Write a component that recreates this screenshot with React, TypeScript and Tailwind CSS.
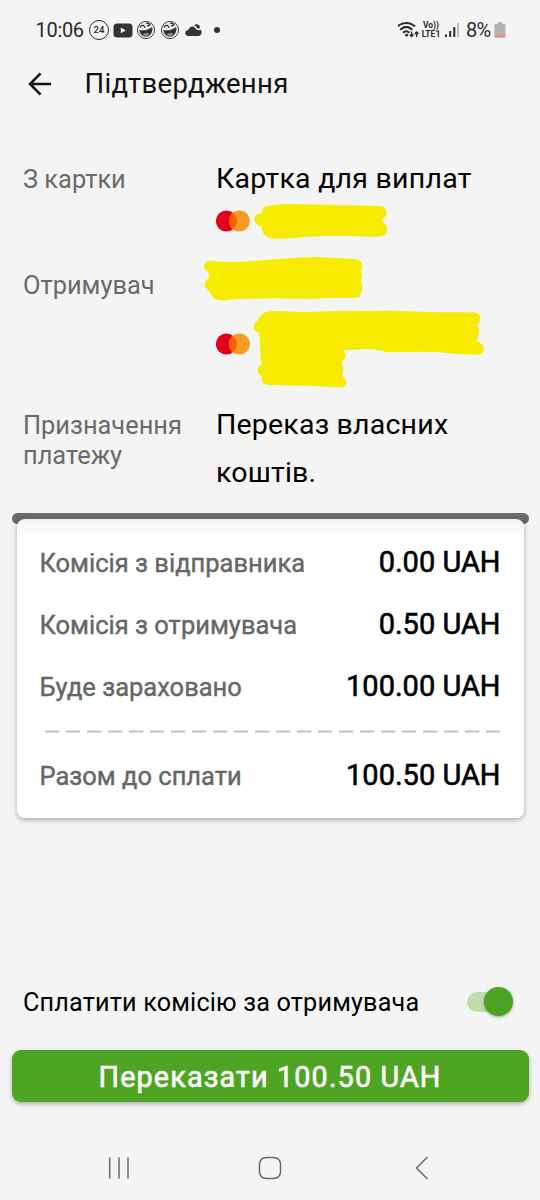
import type { ReactNode } from "react";

const fees = [
  { label: "Комісія з відправника", value: "0.00 UAH" },
  { label: "Комісія з отримувача", value: "0.50 UAH" },
  { label: "Буде зараховано", value: "100.00 UAH" },
];

function LaughIcon() {
  return (
    <svg className="h-5 w-5 shrink-0" viewBox="0 0 20 20" fill="none">
      <circle cx="10" cy="10" r="8.6" fill="#e9e9e9" stroke="#4a4a4a" strokeWidth="1" />
      <path d="M3.400 10c4.200 1 9-.2 12.800-3 .8 4.400-1.200 8.800-5.600 9.600-4 .4-6.800-2.400-7.200-6.600z" fill="#333" />
      <path d="M6.600 14.600c1.800-1.600 4.800-1.800 6.600-1-.8 1.400-1.800 2.200-3.200 2.400-1.400 0-2.400-.4-3.400-1.400z" fill="#999" />
      <path d="M3.800 7.400c.8-1.800 2.200-2.400 4.200-1.800M10.200 3.400c2-.6 3.400 0 4 1.800M8.200 5.800l.6 2M11.200 6.200l2.400-1" stroke="#333" strokeWidth="1.400" />
    </svg>
  );
}

function StatusBar() {
  return (
    <div className="flex h-[60px] items-center pl-[35.500px] pr-[34px] text-[#2a2a2a]">
      <span className="w-[53.500px] text-[20px] leading-5 tracking-[-0.3px] whitespace-nowrap">10:06</span>
      <div className="flex h-5 w-5 items-center justify-center rounded-full border-[1.5px] border-[#2a2a2a] text-[9.500px] leading-none font-medium">
        24
      </div>
      <svg className="ml-1 h-5 w-5" viewBox="0 0 20 20">
        <rect x="0.500" y="3.500" width="19" height="14" rx="3.500" fill="#333" />
        <path d="M7.800 7.600v5.600l5-2.800z" fill="#f4f4f4" />
      </svg>
      <div className="ml-[3px] flex gap-[3.500px]">
        <LaughIcon />
        <LaughIcon />
      </div>
      <svg className="ml-[5px] h-5 w-[17px]" viewBox="0 0 17 20" fill="#333">
        <path d="M3.500 16C1.500 16 .3 14.700.3 13c0-1.800 1.300-3 3.100-3C4 7.800 5.600 6.400 7.800 6.600c1 .1 1.900.7 2.400 1.500 1.300 1.900 3.200 2.500 5.300 1.700.8.700 1.200 1.800 1.100 3-.1 1.900-1.400 3.200-3.300 3.200z" />
        <path d="M9.200 5.400c1.400-2 4.800-1.400 5.600 1 .2.800.1 1.600-.4 2.200-1.300.2-2.300-.4-2.900-1.500-.5-.9-1.300-1.500-2.300-1.700z" />
      </svg>
      <span className="ml-3 h-1.5 w-1.5 rounded-full bg-[#333]" />

      <svg className="ml-auto h-5 w-[23px]" viewBox="0 0 23 20" fill="none" stroke="#2a2a2a">
        <path d="M-.5 6.500C4.500 1.800 12 1.800 17 6.500M2.200 9.700C6 6.200 10.600 6.200 14.300 9.700M5 12.700c2-1.800 4.400-1.800 6.400 0" strokeWidth="2" />
        <circle cx="8.600" cy="15" r="1.500" fill="#2a2a2a" stroke="none" />
        <path d="M13.600 11.500v5M11.700 14.500l1.900 2 1.900-2M18.600 17v-5M16.700 14l1.900-2 1.900 2" strokeWidth="1.400" />
      </svg>
      <div className="flex w-5 flex-col items-center text-[8.500px] leading-[9px] font-bold whitespace-nowrap">
        <span>Vo))</span>
        <span>LTE1</span>
      </div>
      <svg className="ml-1 h-5 w-[15px]" viewBox="0 0 15 20">
        <path d="M0 14.500h2V17H0zM4.200 11h2v6h-2zM8.300 7h2v10h-2z" fill="#2a2a2a" />
        <path d="M12.300 3h1.500v14h-1.500z" fill="#aaa" />
      </svg>
      <span className="ml-1.5 w-[28px] text-[20px] leading-5 tracking-[-0.8px]">8%</span>
      <svg className="h-5 w-[12px]" viewBox="0 0 12 20">
        <path d="M4 2h4v1.800h2.200c.7 0 1.300.6 1.300 1.300V16.200c0 .7-.6 1.300-1.300 1.300H1.800c-.7 0-1.300-.6-1.300-1.300V5.100c0-.7.600-1.300 1.300-1.300H4z" fill="#b3b3b3" />
        <path d="M.5 14.800h11v1.400c0 .7-.6 1.300-1.300 1.300H1.800c-.7 0-1.300-.6-1.300-1.300z" fill="#ee9180" />
      </svg>
    </div>
  );
}

function CardLogo({ className }: { className?: string }) {
  return (
    <svg className={`h-[22px] w-[35px] shrink-0 ${className ?? ""}`} viewBox="0 0 35 22">
      <circle cx="10.400" cy="11" r="10.500" fill="#e2001a" />
      <circle cx="23.400" cy="11" r="10.500" fill="#f59a22" />
      <path d="M16.900 2.750a10.500 10.500 0 0 1 0 16.500a10.500 10.500 0 0 1 0-16.500z" fill="#ff5f00" />
    </svg>
  );
}

function Label({ children }: { children: ReactNode }) {
  return <div className="text-[25.400px] leading-[29.500px] text-[#6a6a6a]">{children}</div>;
}

function Details() {
  return (
    <div className="h-[404.500px] pl-[23px]">
      <div className="box-content grid h-[97px] grid-cols-[193px_1fr] pt-[52px]">
        <div className="pt-[5px]">
          <Label>З картки</Label>
        </div>
        <div>
          <div className="h-9 pt-px text-[28.500px] leading-9 tracking-[0.250px] text-black">Картка для виплат</div>
          <div className="mt-[7px] flex items-center">
            <CardLogo />
            <svg className="ml-[3px] h-9 w-[134px]" viewBox="193 160 402 108">
              <path
                d="M222 172Q255 164 300 163Q420 167 560 168Q590 168 591 190Q588 204 575 211Q580 218 588 226Q598 240 585 256Q575 262 550 261L440 258L350 261Q290 268 250 267Q215 262 217 232Q195 225 194 208Q196 190 219 190Q217 177 222 172Z"
                fill="#f7eb00"
              />
            </svg>
          </div>
        </div>
      </div>

      <div className="grid h-[150px] grid-cols-[193px_1fr]">
        <div className="pt-[14px]">
          <Label>Отримувач</Label>
        </div>
        <div>
          <svg className="-mt-[1px] -ml-3 h-[45px] w-[160px]" viewBox="44 34 480 135">
            <path
              d="M62 48Q120 54 180 50Q300 40 375 37Q440 40 500 44Q520 48 519 66Q518 76 514 80Q520 90 517 102L514 109Q521 120 519 132Q514 150 510 157Q500 161 440 159L360 163L250 161L140 163Q110 170 85 166Q70 162 64 147Q58 135 47 128Q42 112 58 100Q62 92 58 84Q40 70 45 58Q52 47 62 48Z"
              fill="#f7eb00"
            />
          </svg>
          <div className="mt-[9px] flex items-start">
            <CardLogo className="mt-[23px]" />
            <svg className="ml-[2px] h-[78px] w-[232px]" viewBox="188 194 696 234">
              <path
                d="M215 205Q230 196 260 197L340 200Q450 196 600 196L740 201L850 201Q872 206 870 222Q868 236 857 241Q868 246 866 258Q864 275 858 288Q880 294 881 311Q878 328 860 328Q830 327 800 326Q750 319 700 319L590 321Q560 311 530 311L460 315Q470 330 462 342L452 349Q462 362 458 378L455 394Q470 402 468 415Q464 427 445 426L350 421L235 419Q214 416 213 402L214 391Q200 385 202 370Q206 359 217 355Q208 345 211 330L207 262Q190 260 190 243Q192 230 204 224Q206 214 215 205Z"
                fill="#f7eb00"
              />
            </svg>
          </div>
        </div>
      </div>

      <div className="grid grid-cols-[193px_1fr]">
        <div className="pt-[4px]">
          <Label>
            Призначення
            <br />
            платежу
          </Label>
        </div>
        <div className="-mt-[6px] text-[28.500px] leading-[48.400px] tracking-[0.2px] text-black">
          Переказ власних
          <br />
          коштів.
        </div>
      </div>
    </div>
  );
}

function FeeRow({ label, value }: { label: string; value: string }) {
  return (
    <div className="flex h-[62px] items-center justify-between">
      <span className="text-[25.500px] text-[#666] [-webkit-text-stroke:0.4px]">{label}</span>
      <span className="pb-px text-[29px] text-black [-webkit-text-stroke:0.6px]">{value}</span>
    </div>
  );
}

function FeeCard() {
  return (
    <div className="mx-[11.500px]">
      <div className="h-[11px] rounded-full bg-[#6a6a6a]" />
      <div className="relative mx-[5px] -mt-[5px] h-[299px] rounded-[8px] bg-linear-to-b from-[#f4f4f4] to-white to-[20px] px-[23px] pt-[14px] shadow-[0_2px_5px_rgba(0,0,0,0.3)]">
        {fees.map((fee) => (
          <FeeRow key={fee.label} {...fee} />
        ))}
        <svg className="mt-[11px] ml-[5px] h-[3px] w-[457px]" viewBox="0 0 457 3">
          <path d="M0 1.500h456" stroke="#c2c2c2" strokeWidth="2" strokeDasharray="14.200 6.800" />
        </svg>
        <div className="mt-[13px]">
          <FeeRow label="Разом до сплати" value="100.50 UAH" />
        </div>
      </div>
    </div>
  );
}

function NavBar() {
  return (
    <div className="flex h-[65px] items-center px-[107px] text-[#6b6b6b]">
      <svg className="h-6 w-6" viewBox="0 0 24 24" stroke="currentColor" strokeWidth="1.500">
        <path d="M2.700 1.500v21M12 1.500v21M21 1.500v21" />
      </svg>
      <svg className="ml-[127px] h-6 w-6" viewBox="0 0 24 24" fill="none" stroke="currentColor" strokeWidth="1.500">
        <rect x="1.500" y="1.500" width="21" height="21" rx="6.500" />
      </svg>
      <svg className="mr-[3px] ml-auto h-6 w-4" viewBox="0 0 16 24" fill="none" stroke="currentColor" strokeWidth="1.500">
        <path d="M13.500 1L2.500 12l11 11" />
      </svg>
    </div>
  );
}

export default function App() {
  return (
    <div className="flex h-[1200px] w-[540px] flex-col overflow-hidden bg-[#f4f4f4] font-['Roboto',sans-serif]">
      <StatusBar />
      <header className="flex h-12 items-center pl-[28px]">
        <svg className="h-6 w-6" viewBox="0 0 24 24" fill="none" stroke="#111" strokeWidth="2.500">
          <path d="M12.500 1.500L2 12l10.500 10.500M2 12h21" />
        </svg>
        <h1 className="ml-[32.500px] text-[27.500px] font-normal tracking-[0.3px] text-[#111]">Підтвердження</h1>
      </header>

      <Details />
      <FeeCard />

      <div className="mt-[160.500px] flex h-12 shrink-0 items-center justify-between pr-[27.500px] pl-[23px]">
        <span className="pt-0.5 text-[25.200px] tracking-[0.180px] text-black">Сплатити комісію за отримувача</span>
        <div className="flex h-5 w-[46px] items-center justify-end rounded-full bg-[#bfdcae]">
          <span className="mb-px h-[29px] w-[29px] shrink-0 rounded-full bg-[#4ba323] shadow-[0_1px_3px_rgba(0,0,0,0.35)]" />
        </div>
      </div>
      <button className="mx-[11.500px] mt-[24px] h-[52px] shrink-0 rounded-[9px] bg-[#4ea524] pt-[3px] text-[28.800px] tracking-[1.120px] text-white shadow-[0_2px_4px_rgba(0,0,0,0.3)] [-webkit-text-stroke:0.6px]">
        Переказати 100.50 UAH
      </button>
      <div className="mt-auto">
        <NavBar />
      </div>
    </div>
  );
}
